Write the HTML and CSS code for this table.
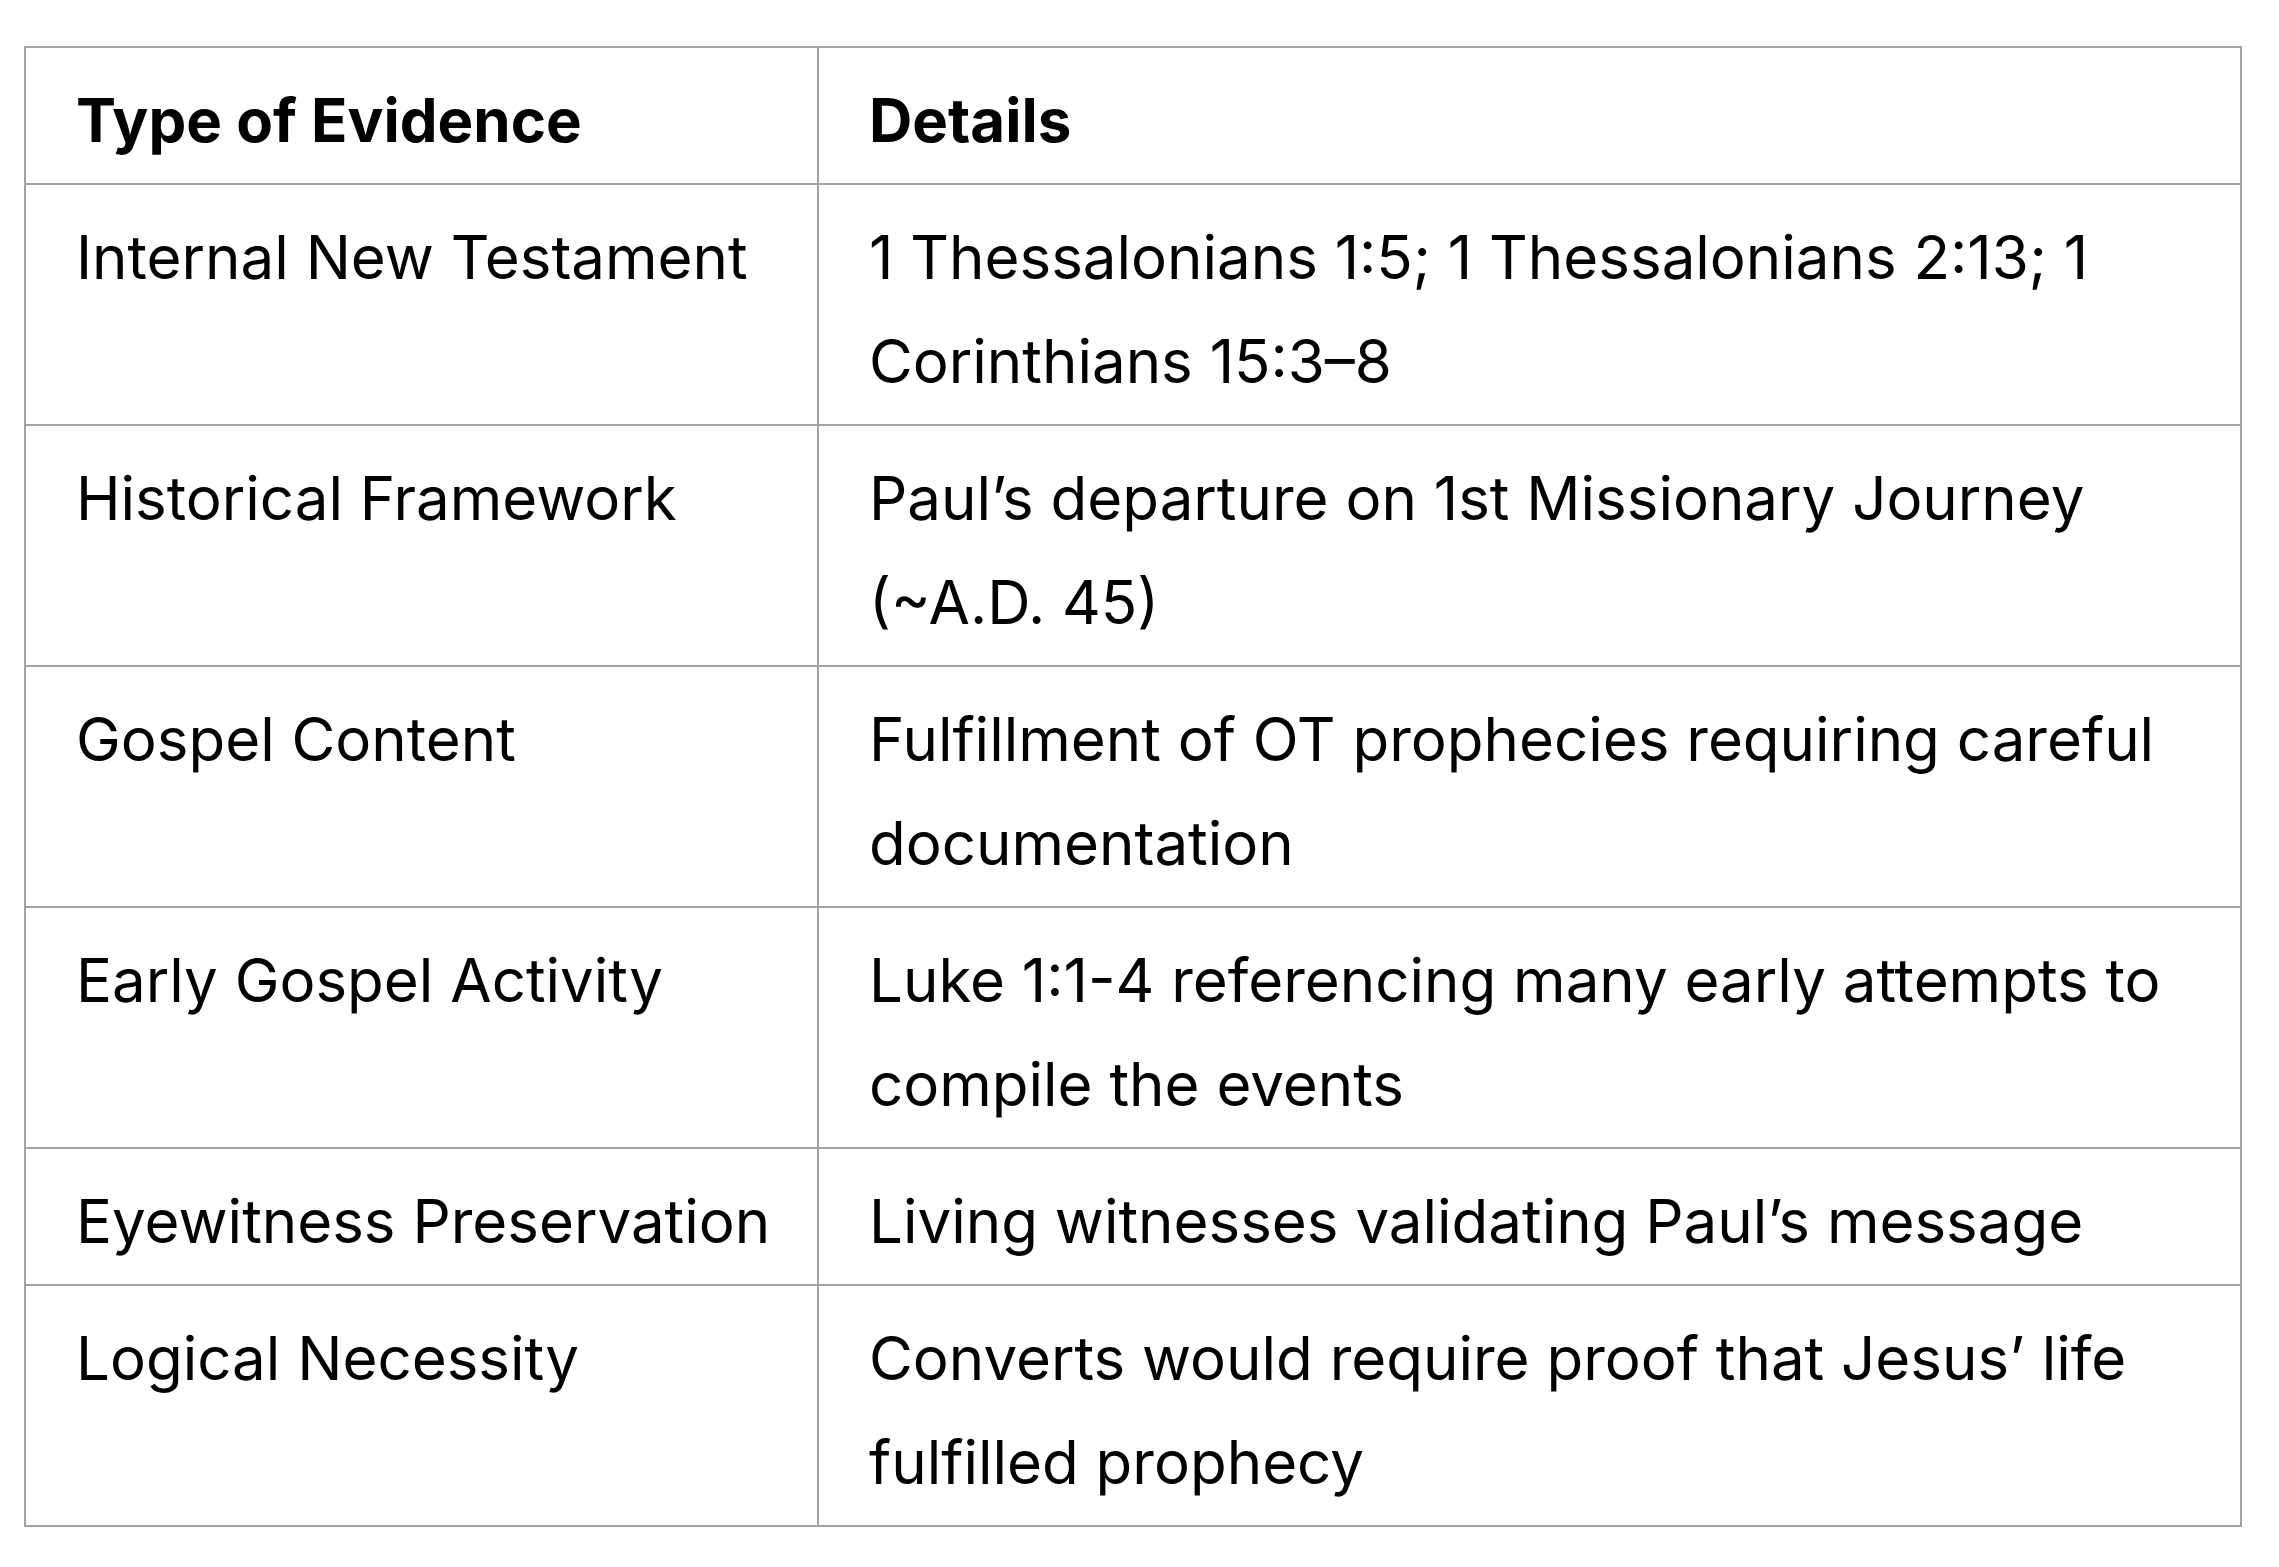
FILE: index.html
```html
<!DOCTYPE html>
<html lang="en">
<head>
<meta charset="utf-8">
<title>Type of Evidence</title>
<link rel="stylesheet" href="styles.css">
</head>
<body>
<table class="evidence">
  <thead>
    <tr><th class="col-type">Type of Evidence</th><th>Details</th></tr>
  </thead>
  <tbody>
    <tr><td>Internal New Testament</td><td>1 Thessalonians 1:5; 1 Thessalonians 2:13; 1 Corinthians 15:3–8</td></tr>
    <tr><td>Historical Framework</td><td>Paul’s departure on 1st Missionary Journey (~A.D. 45)</td></tr>
    <tr><td>Gospel Content</td><td>Fulfillment of OT prophecies requiring careful documentation</td></tr>
    <tr><td>Early Gospel Activity</td><td>Luke 1:1-4 referencing many early attempts to compile the events</td></tr>
    <tr><td>Eyewitness Preservation</td><td>Living witnesses validating Paul’s message</td></tr>
    <tr><td>Logical Necessity</td><td>Converts would require proof that Jesus’ life fulfilled prophecy</td></tr>
  </tbody>
</table>
</body>
</html>
```

FILE: styles.css
```css
html, body {
  margin: 0;
  padding: 0;
  background: #ffffff;
}
body {
  padding: 46px 0 0 24px;
  font-family: Inter, "Noto Sans", "Liberation Sans", sans-serif;
  color: #000000;
}
.evidence {
  border-collapse: collapse;
  width: 2218px;
  table-layout: fixed;
  font-size: 60px;
  line-height: 104px;
}
.evidence th,
.evidence td {
  border: 2px solid #a3a3a3;
  text-align: left;
  vertical-align: top;
  padding: 20px 24px 11px 50px;
}
.evidence th {
  font-weight: 700;
}
.evidence td {
  font-weight: 400;
}
.col-type {
  width: 717px;
}
```
